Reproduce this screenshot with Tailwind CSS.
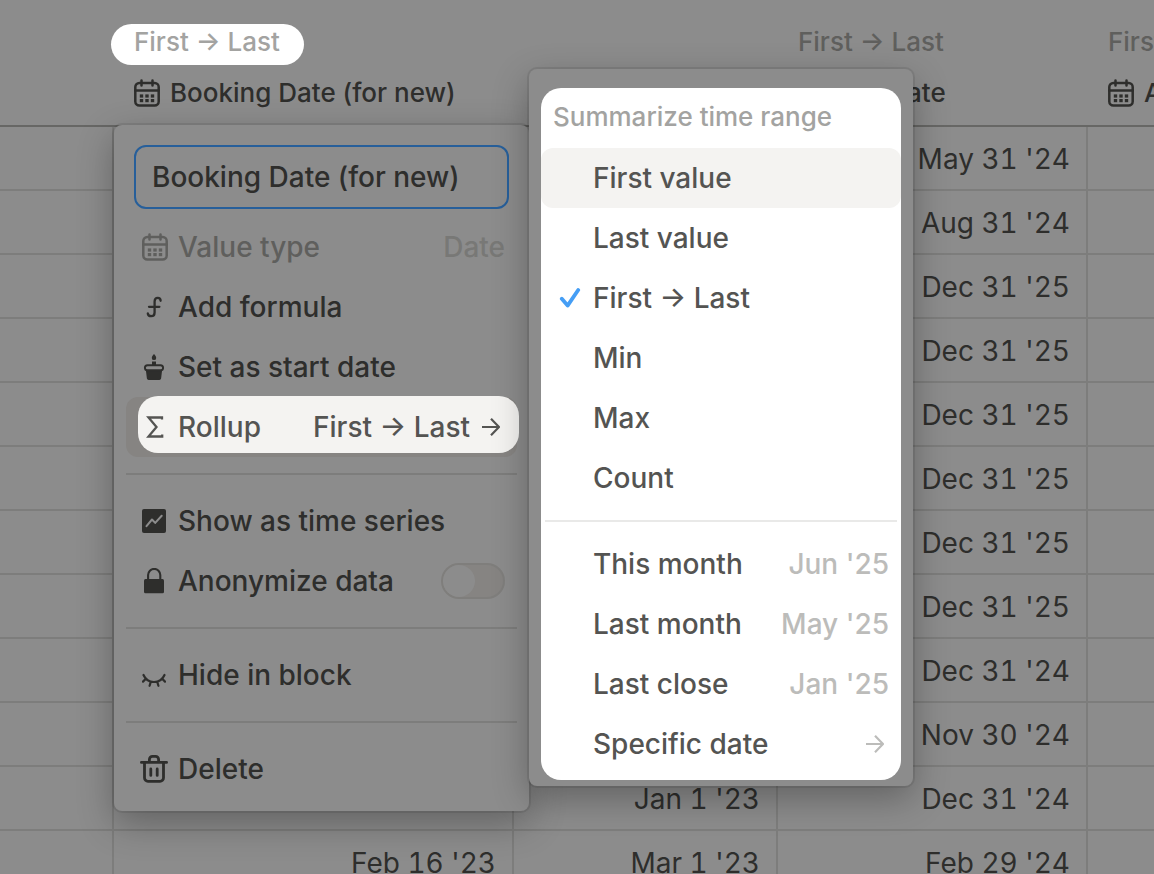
<!DOCTYPE html>
<html lang="en">
<head>
  <meta charset="UTF-8" />
  <meta name="viewport" content="width=device-width, initial-scale=1.0"/>
  <title>Bookings</title>
  <script src="https://cdn.jsdelivr.net/npm/@tailwindcss/browser@4"></script>
</head>
<body class="bg-[#8c8c8c] font-['Inter',sans-serif] font-medium text-[#2e2e2c]">

  <!-- Shared icons -->
  <svg class="hidden">
    <symbol id="calendar" viewBox="0 0 26 28">
      <g fill="none" stroke="currentColor" stroke-width="2.5" stroke-linecap="round">
        <rect x="1.3" y="4" width="23.4" height="22.6" rx="4"/>
        <path d="M1.2 11.6h23.6M7.5 1.6v5M18.5 1.6v5"/>
      </g>
      <g fill="currentColor">
        <rect x="5.8" y="15.4" width="3.4" height="3.2"/><rect x="11.3" y="15.4" width="3.4" height="3.2"/><rect x="16.8" y="15.4" width="3.4" height="3.2"/>
        <rect x="5.8" y="20" width="3.4" height="3.2"/><rect x="11.3" y="20" width="3.4" height="3.2"/><rect x="16.8" y="20" width="3.4" height="3.2"/>
      </g>
    </symbol>
    <symbol id="arrow" viewBox="0 0 18 18">
      <path d="M0 9h17M9 .8 17 9l-8 8.2" fill="none" stroke="currentColor" stroke-width="2.2"/>
    </symbol>
  </svg>

  <main class="relative h-screen overflow-hidden">

    <!-- Bookings table -->
    <table class="w-full min-w-[1154px] table-fixed border-separate border-spacing-0 whitespace-nowrap">
      <colgroup>
        <col class="w-[114px]"/>
        <col class="w-[400px]"/>
        <col class="w-[264px]"/>
        <col class="w-[310px]"/>
        <col/>
      </colgroup>
      <thead class="text-[26px] leading-8">
        <tr class="h-[127px] text-left align-top *:border-b-2 *:border-[#676765] *:font-medium">
          <th></th>
          <th class="px-5 pt-6">
            <span class="-ml-[23px] flex h-[41px] w-fit rounded-full bg-white pl-[23px] pr-6 pt-0.5 text-[#a3a3a1]">First → Last</span>
            <span class="mt-3 flex items-center gap-2.5"><svg class="h-7 w-[26px]"><use href="#calendar"/></svg>Booking Date (for new)</span>
          </th>
          <th></th>
          <th class="px-5 pt-6">
            <span class="flex h-[41px] pt-0.5 text-[#5f5f5d]">First → Last</span>
            <span class="mt-3 flex items-center gap-2.5"><svg class="h-7 w-[26px]"><use href="#calendar"/></svg>End Date</span>
          </th>
          <th class="overflow-hidden pl-5 pt-6">
            <span class="flex h-[41px] pt-0.5 text-[#5f5f5d]">First → Last</span>
            <span class="mt-3 flex items-center gap-2.5"><svg class="h-7 w-[26px] shrink-0"><use href="#calendar"/></svg>Actual Date</span>
          </th>
        </tr>
      </thead>
      <tbody id="rows" class="text-right text-[28px] font-normal leading-8 tabular-nums"></tbody>
    </table>

    <!-- Column menu -->
    <div class="absolute left-[114px] top-[125px] w-[415px] rounded-lg bg-[#8c8c8c] px-3 pb-3 pt-5 text-[28px] leading-8 shadow-[0_0_0_2px_rgba(0,0,0,0.08),0_12px_36px_rgba(0,0,0,0.3)]">
      <div class="px-2 pb-2">
        <input type="text" aria-label="Column name" value="Booking Date (for new)" class="h-16 w-full rounded-xl border-2 border-[#275f9a] px-4 outline-none"/>
      </div>
      <button class="flex h-15 w-full items-center gap-3 pl-4 pr-3 text-[#5f5f5d]" disabled>
        <span class="w-6 shrink-0"><svg class="h-7 w-[26px]"><use href="#calendar"/></svg></span>
        Value type
        <span class="ml-auto text-[#787876]">Date</span>
      </button>
      <button class="flex h-15 w-full items-center gap-3 pl-4 pr-3">
        <svg class="size-6" viewBox="0 0 24 24" fill="none" stroke="currentColor" stroke-width="2.3" stroke-linecap="round"><path d="M18.6 5.8c0-2-1-3-2.8-3-2.3 0-3.2 1.5-3.2 3.6v11c0 2.3-1 3.7-3.4 3.7-2 0-3.2-.8-3.4-2.6M7 11.8h10.4"/></svg>
        Add formula
      </button>
      <button class="flex h-15 w-full items-center gap-3 pl-4 pr-3">
        <svg class="h-[26px] w-6" viewBox="0 0 24 26" fill="currentColor"><path d="M12 0c1.3 1.6 2.2 2.6 2.2 3.9a2.2 2.2 0 0 1-4.4 0C9.8 2.6 10.7 1.6 12 0zM10 7.6h4v3.4h-4z"/><path d="M3.8 15.5h16.4l-1.1 9a1.8 1.8 0 0 1-1.8 1.5H6.7a1.8 1.8 0 0 1-1.8-1.5z"/><rect x="2.9" y="11.2" width="18.2" height="5.2" rx="2.6" fill="none" stroke="currentColor" stroke-width="1.9"/></svg>
        Set as start date
      </button>
      <button class="relative flex h-15 w-full items-center gap-3 rounded-xl bg-[#868482] pl-4 pr-[17px] text-[#545452]">
        <span class="absolute -right-0.5 -top-px bottom-1 left-3 rounded-[20px] bg-[#f4f3f1]"></span>
        <svg class="relative size-6" viewBox="0 0 24 24" fill="none" stroke="currentColor" stroke-width="2.3"><path d="M20 4.6V2.5H6.5l8 9.5-8 9.5H20.2V19.4"/></svg>
        <span class="relative">Rollup</span>
        <span class="relative ml-auto flex items-center gap-3">First → Last<svg class="size-[18px]"><use href="#arrow"/></svg></span>
      </button>
      <hr class="my-4 border-t-2 border-[#7d7d7c]"/>
      <button class="flex h-15 w-full items-center gap-3 pl-4 pr-3">
        <svg class="size-6" viewBox="0 0 24 24"><rect width="24" height="24" rx="2" fill="currentColor"/><path d="M4.5 17.2 10 10.5l3.2 3.4L19.7 6.8" fill="none" stroke="#8c8c8c" stroke-width="2" stroke-linecap="round" stroke-linejoin="round"/></svg>
        Show as time series
      </button>
      <label class="flex h-15 w-full items-center gap-3 pl-4 pr-3">
        <svg class="h-[26px] w-6" viewBox="0 0 24 26"><path d="M6.1 11.5V7a6 6 0 0 1 12.2 0v4.5" fill="none" stroke="currentColor" stroke-width="2.1"/><rect x="2" y="11" width="20" height="14.3" rx="1.5" fill="currentColor"/></svg>
        Anonymize data
        <input type="checkbox" role="switch" class="ml-auto h-9 w-16 appearance-none rounded-full border-2 border-[#7f7e7c] bg-[#868482] before:block before:size-8 before:rounded-full before:bg-[#8c8c8c] checked:before:ml-7"/>
      </label>
      <hr class="my-4 border-t-2 border-[#7d7d7c]"/>
      <button class="flex h-15 w-full items-center gap-3 pl-4 pr-3">
        <svg class="size-6" viewBox="0 0 24 24" fill="none" stroke="currentColor" stroke-width="2.2" stroke-linecap="round"><path d="M1.5 12C3.5 16.5 7.5 19 12 19s8.5-2.5 10.5-7M3.800 15.800 1 18.600M8.800 18.800 7.600 22.800M15.200 18.800l1.200 4M20.200 15.800l2.800 2.800"/></svg>
        Hide in block
      </button>
      <hr class="my-4 border-t-2 border-[#7d7d7c]"/>
      <button class="flex h-15 w-full items-center gap-3 pl-4 pr-3">
        <span class="flex w-6 shrink-0 justify-center"><svg class="size-7 shrink-0" viewBox="0 0 28 28" fill="none" stroke="currentColor" stroke-width="2.8" stroke-linecap="round"><path d="M1.4 7.4h25.2M9.4 7V4.4a3 3 0 0 1 3-3h3.2a3 3 0 0 1 3 3V7M4.5 7.8v15a3.5 3.5 0 0 0 3.5 3.5h12a3.5 3.5 0 0 0 3.5-3.5v-15M10.8 14v6.4M17.2 14v6.4"/></svg></span>
        Delete
      </button>
    </div>

    <!-- Rollup submenu -->
    <div class="absolute left-[529px] top-[69px] w-96 rounded-lg bg-[#8c8c8c] px-3 pb-1.5 pt-[19px] text-[28px] leading-8 shadow-[0_0_0_2px_rgba(0,0,0,0.08),0_12px_36px_rgba(0,0,0,0.3)]">
      <div class="rounded-[20px] bg-white pb-1.5 text-[#545452]">
        <h2 class="flex h-15 items-center px-3 pb-0.5 text-[26px] text-[#a3a3a1]">Summarize time range</h2>
        <button class="flex h-15 w-full items-center rounded-xl bg-[#f4f3f1] pl-13">First value</button>
        <button class="flex h-15 w-full items-center pl-13">Last value</button>
        <button class="flex h-15 w-full items-center gap-3 pl-[18px]">
          <svg class="h-5 w-[22px]" viewBox="0 0 22 20"><path d="M2.8 10.8 8.6 17.6 19.2 2" fill="none" stroke="#459ef5" stroke-width="3.8" stroke-linecap="round" stroke-linejoin="round"/></svg>
          First → Last
        </button>
        <button class="flex h-15 w-full items-center pl-13">Min</button>
        <button class="flex h-15 w-full items-center pl-13">Max</button>
        <button class="flex h-15 w-full items-center pl-13">Count</button>
        <hr class="mx-1 my-3 border-t-2 border-[#e9e9e8]"/>
        <button class="flex h-15 w-full items-center justify-between pl-13 pr-3">This month <span class="text-[#bcbcba]">Jun '25</span></button>
        <button class="flex h-15 w-full items-center justify-between pl-13 pr-3">Last month <span class="text-[#bcbcba]">May '25</span></button>
        <button class="flex h-15 w-full items-center justify-between pl-13 pr-3">Last close <span class="text-[#bcbcba]">Jan '25</span></button>
        <button class="flex h-15 w-full items-center justify-between pl-13 pr-[17px]">Specific date <svg class="size-[18px] text-[#bcbcba]"><use href="#arrow"/></svg></button>
      </div>
    </div>

  </main>

  <script>
    const rows = [
      ['', '', "May 31 '24"],
      ['', '', "Aug 31 '24"],
      ['', '', "Dec 31 '25"],
      ['', '', "Dec 31 '25"],
      ['', '', "Dec 31 '25"],
      ['', '', "Dec 31 '25"],
      ['', '', "Dec 31 '25"],
      ['', '', "Dec 31 '25"],
      ['', '', "Dec 31 '24"],
      ['', '', "Nov 30 '24"],
      ['', "Jan 1 '23", "Dec 31 '24"],
      ["Feb 16 '23", "Mar 1 '23", "Feb 29 '24"]
    ];

    document.getElementById('rows').innerHTML = rows.map(row => `
      <tr class="h-16">
        ${['', ...row, ''].map(cell => `<td class="border-b-2 border-r-2 border-[#7d7d7c] pr-4 pt-0.5 last:border-r-0">${cell}</td>`).join('')}
      </tr>
    `).join('');
  </script>

</body>
</html>
